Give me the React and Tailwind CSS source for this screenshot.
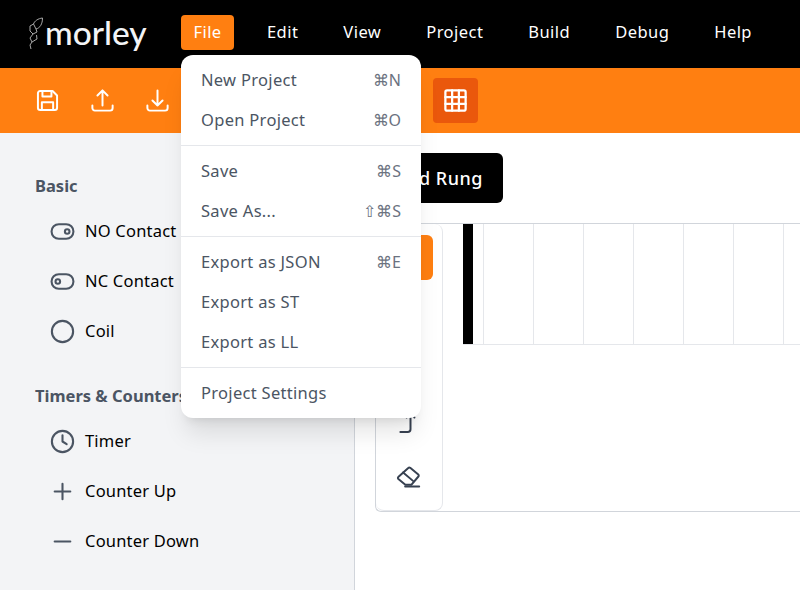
import { Fragment } from "react";

const FONT = { fontFamily: '"Noto Sans", sans-serif' };

const topMenus = ["File", "Edit", "View", "Project", "Build", "Debug", "Help"];

const fileMenu = [
  [
    { label: "New Project", keys: "⌘N" },
    { label: "Open Project", keys: "⌘O" },
  ],
  [
    { label: "Save", keys: "⌘S" },
    { label: "Save As...", keys: "⇧⌘S" },
  ],
  [
    { label: "Export as JSON", keys: "⌘E" },
    { label: "Export as ST" },
    { label: "Export as LL" },
  ],
  [{ label: "Project Settings" }],
];

function Icon({ className = "w-[27px] h-[27px]", width = 1.75, children }) {
  return (
    <svg
      viewBox="0 0 24 24"
      fill="none"
      stroke="currentColor"
      strokeWidth={width}
      strokeLinecap="round"
      strokeLinejoin="round"
      className={className}
    >
      {children}
    </svg>
  );
}

const SaveIcon = () => (
  <Icon>
    <path d="M5.5 3.5h11l4 4v11a2 2 0 0 1-2 2h-13a2 2 0 0 1-2-2v-13a2 2 0 0 1 2-2Z" />
    <path d="M7.5 3.5v5h8v-5M7 20.5v-7h10v7" />
  </Icon>
);
const UploadIcon = () => (
  <Icon>
    <path d="M3 16.5v2.25A2.25 2.25 0 0 0 5.25 21h13.5A2.25 2.25 0 0 0 21 18.75V16.5m-13.5-9L12 3m0 0 4.5 4.5M12 3v13.5" />
  </Icon>
);
const DownloadIcon = () => (
  <Icon>
    <path d="M3 16.5v2.25A2.25 2.25 0 0 0 5.25 21h13.5A2.25 2.25 0 0 0 21 18.75V16.5M16.5 12 12 16.5m0 0L7.5 12m4.5 4.5V3" />
  </Icon>
);
const GridIcon = () => (
  <Icon width={2}>
    <rect x="3" y="3" width="18" height="18" rx="1.5" />
    <path d="M3 9h18M3 15h18M9 3v18M15 3v18" />
  </Icon>
);

const NoContactIcon = () => (
  <Icon className="w-[25px] h-[25px]" width={2}>
    <rect x="1.5" y="5" width="21" height="14" rx="7" />
    <circle cx="16.5" cy="12" r="2.2" />
  </Icon>
);
const NcContactIcon = () => (
  <Icon className="w-[25px] h-[25px]" width={2}>
    <rect x="1.5" y="5" width="21" height="14" rx="7" />
    <circle cx="7.5" cy="12" r="2.2" />
  </Icon>
);
const CoilIcon = () => (
  <Icon className="w-[25px] h-[25px]" width={2}>
    <circle cx="12" cy="12" r="10.2" />
  </Icon>
);
const ClockIcon = () => (
  <Icon className="w-[25px] h-[25px]" width={2}>
    <circle cx="12" cy="12" r="10.2" />
    <path d="M12 6v6l4 2.5" />
  </Icon>
);
const PlusIcon = () => (
  <Icon className="w-[25px] h-[25px]" width={2}>
    <path d="M12 4.5v15M4.5 12h15" />
  </Icon>
);
const MinusIcon = () => (
  <Icon className="w-[25px] h-[25px]" width={2}>
    <path d="M4.5 12h15" />
  </Icon>
);
const BranchIcon = () => (
  <Icon>
    <path d="M3 20.5h6.5a2.5 2.5 0 0 0 2.5-2.5V4M8.5 7.5 12 4l3.5 3.5" />
  </Icon>
);
const EraserIcon = () => (
  <Icon>
    <path d="m13.5 3.4 7.2 6a1.2 1.2 0 0 1 .1 1.7l-6.3 7.4H9.2L3 13.3a1.2 1.2 0 0 1-.1-1.7l8.9-8a1.3 1.3 0 0 1 1.7-.2Z" />
    <path d="m7.2 7.5 8.8 7.5M9 20h12.5" />
  </Icon>
);

function Logo() {
  return (
    <div className="flex items-center w-[119px] text-[#f3f4f6]">
      <svg viewBox="29 15 15 33" fill="none" stroke="currentColor" strokeWidth="1" className="w-[15px] h-[33px] text-[#a8a8a8]">
        <path d="M42.5 16C38 16.5 34.5 19 33.5 22L36 27C40 26 42.5 22 42.5 16ZM33.5 22 30 24V29L33 32 37 30 36 27M33 32 30 36 32 40 37 37 36.5 33M32 40 30 43 31 47" />
      </svg>
      <span className="text-[33.5px] leading-none font-medium ml-px -mt-0.5" style={{ fontFamily: '"Lato", sans-serif' }}>
        morley
      </span>
    </div>
  );
}

function ToolGroup({ title, items }) {
  return (
    <div>
      <h3 className="h-6 mb-2 text-[16.5px] leading-6 font-bold text-[#4b5563] whitespace-nowrap">{title}</h3>
      {items.map(({ label, icon }) => (
        <div key={label} className="flex items-center gap-2.5 h-[50px] pl-[15px] text-black">
          <span className="w-[25px] h-[25px] text-[#4b5563]">{icon}</span>
          <span className="text-[16.5px] tracking-[0.2px] whitespace-nowrap">{label}</span>
        </div>
      ))}
    </div>
  );
}

export default function App() {
  const gridLines = Array.from({ length: 7 });

  return (
    <div className="relative w-[800px] h-[590px] overflow-hidden bg-white flex flex-col" style={FONT}>
      {/* top menu */}
      <header className="h-[68px] shrink-0 bg-black flex items-center pl-[29px] pb-px">
        <Logo />
        <nav className="flex items-center gap-[21px] ml-[33px] -mt-[3px] text-white text-[16.5px] tracking-[0.45px]">
          {topMenus.map((name) => (
            <button key={name} className={`h-[35px] rounded ${name === "File" ? "w-[53px] bg-[#ff7f11]" : "px-3"}`}>
              {name}
            </button>
          ))}
        </nav>
      </header>

      {/* orange toolbar */}
      <div className="h-[65px] shrink-0 bg-[#ff7f11] flex items-center text-white pl-[25px] pr-2">
        <div className="flex gap-2.5">
          {[SaveIcon, UploadIcon, DownloadIcon].map((I, i) => (
            <button key={i} className="w-[45px] h-[45px] flex items-center justify-center">
              <I />
            </button>
          ))}
        </div>
        <button className="ml-[253px] w-[45px] h-[45px] rounded bg-[#ea580c] flex items-center justify-center">
          <GridIcon />
        </button>
      </div>

      <div className="flex-1 flex min-h-0">
        <aside className="w-[355px] shrink-0 bg-[#f3f4f6] border-r border-[#d1d5db] pl-[35px] pt-[41px] flex flex-col gap-7">
          <ToolGroup
            title="Basic"
            items={[
              { label: "NO Contact", icon: <NoContactIcon /> },
              { label: "NC Contact", icon: <NcContactIcon /> },
              { label: "Coil", icon: <CoilIcon /> },
            ]}
          />
          <ToolGroup
            title="Timers & Counters"
            items={[
              { label: "Timer", icon: <ClockIcon /> },
              { label: "Counter Up", icon: <PlusIcon /> },
              { label: "Counter Down", icon: <MinusIcon /> },
            ]}
          />
        </aside>

        <main className="flex-1 min-w-0 pt-5 pl-5">
          <button className="w-[128px] h-[50px] rounded-md bg-black text-white text-lg tracking-[0.5px] font-medium">Add Rung</button>

          <div className="mt-5 h-[289px] flex border-l border-y border-[#d1d5db] rounded-bl-md">
            <div className="w-[67px] h-full shrink-0 border-r border-b border-[#e5e7eb] rounded-lg pl-3 pt-[11px] flex flex-col gap-2.5 text-[#374151]">
              <div className="w-[45px] h-[45px] rounded-md bg-[#ff7f11]" />
              <div className="w-[45px] h-[45px]" />
              <div className="w-[45px] h-[45px]" />
              <div className="w-[45px] h-[45px] flex items-center justify-center">
                <BranchIcon />
              </div>
              <div className="w-[45px] h-[45px] pr-1 flex items-center justify-center">
                <EraserIcon />
              </div>
            </div>

            {/* rung */}
            <div className="ml-5 h-[121px] flex-1 flex border-b border-[#e5e7eb]">
              <div className="w-2.5 shrink-0 bg-black" />
              <div className="w-[11px] shrink-0 border-r border-[#e5e7eb]" />
              {gridLines.map((_, i) => (
                <div key={i} className="w-[50px] shrink-0 border-r border-[#e5e7eb]" />
              ))}
            </div>
          </div>
        </main>
      </div>

      {/* file menu */}
      <div className="absolute left-[181px] top-[55px] w-[240px] py-[5px] rounded-xl bg-white shadow-xl">
        {fileMenu.map((group, g) => (
          <Fragment key={g}>
            {g > 0 && <div className="h-px my-[5px] bg-[#e5e7eb]" />}
            {group.map(({ label, keys }) => (
              <div key={label} className="h-10 px-5 flex items-center justify-between text-[16.5px] tracking-[0.3px] text-[#4b5563]">
                <span>{label}</span>
                {keys && <span className="text-base tracking-normal text-[#6b7280]">{keys}</span>}
              </div>
            ))}
          </Fragment>
        ))}
      </div>
    </div>
  );
}
